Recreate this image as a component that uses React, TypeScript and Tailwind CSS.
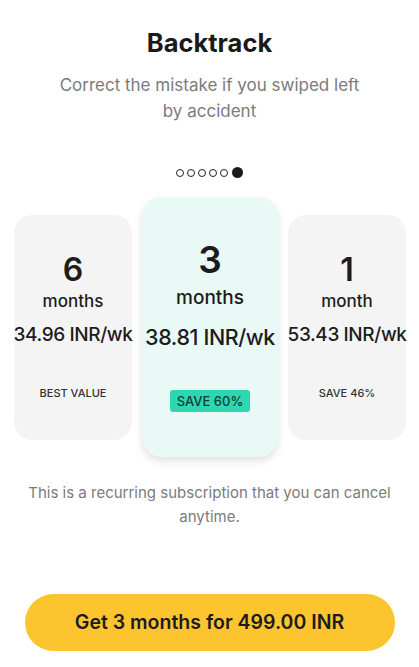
import React from "react";

const font = { fontFamily: "Inter, 'Noto Sans', sans-serif" };

function SideCard({ num, unit, price, label }: { num: string; unit: string; price: string; label: string }) {
  return (
    <div className="flex h-[225px] w-[118px] shrink-0 flex-col items-center rounded-[18px] bg-[#f4f4f4] text-[#1c1c1c]">
      <div className="mt-[40px] text-[32px] font-semibold leading-[30px]">{num}</div>
      <div className="mt-[5px] text-[17px] font-medium leading-[22px]">{unit}</div>
      <div className="mt-[11px] whitespace-nowrap text-[19px] font-medium leading-[24px] tracking-[-0.4px]">{price}</div>
      <div className="mt-[39px] text-[11px] font-medium leading-[14px] text-[#333]">{label}</div>
    </div>
  );
}

export default function App() {
  return (
    <div className="flex h-[667px] w-[419px] flex-col items-center bg-white" style={font}>
      <h1 className="mt-[28px] text-[25.5px] font-bold leading-[30px] text-[#1a1a1a]">Backtrack</h1>
      <p className="mt-[14px] w-[318px] text-center text-[17px] leading-[26px] text-[#7b7b7b]">
        Correct the mistake if you swiped left by accident
      </p>
      <div className="mt-[43px] flex items-center gap-[3px]">
        {[0, 1, 2, 3, 4].map((i) => (
          <span key={i} className="h-[8px] w-[8px] rounded-full border-[1.5px] border-[#222]" />
        ))}
        <span className="ml-[1px] h-[11px] w-[11px] rounded-full bg-[#1a1a1a]" />
      </div>
      <div className="mt-[19px] flex w-full items-center gap-[10px] pl-[14px]">
        <SideCard num="6" unit="months" price="34.96 INR/wk" label="BEST VALUE" />
        <div className="flex h-[260px] w-[136px] shrink-0 flex-col items-center rounded-[20px] bg-[#e9f9f6] text-[#1c1c1c] shadow-[0_4px_8px_rgba(0,0,0,0.12)]">
          <div className="mt-[46px] text-[37px] font-semibold leading-[34px]">3</div>
          <div className="mt-[9px] text-[19px] font-medium leading-[24px]">months</div>
          <div className="mt-[14px] whitespace-nowrap text-[21.5px] font-medium leading-[26px] tracking-[-0.4px]">38.81 INR/wk</div>
          <div className="mt-[40px] rounded-[3px] bg-[#2fd6b2] px-[7px] py-[3px] text-[13px] font-medium leading-[16px] text-[#123c33]">
            SAVE 60%
          </div>
        </div>
        <SideCard num="1" unit="month" price="53.43 INR/wk" label="SAVE 46%" />
      </div>
      <p className="mt-[24px] w-[380px] text-center text-[15px] leading-[24px] text-[#7b7b7b]">
        This is a recurring subscription that you can cancel anytime.
      </p>
      <button className="mt-[65px] flex h-[57px] w-[370px] items-center justify-center rounded-full bg-[#fcc530] text-[19.5px] font-semibold text-[#1c1c1c]">
        Get 3 months for 499.00 INR
      </button>
    </div>
  );
}
